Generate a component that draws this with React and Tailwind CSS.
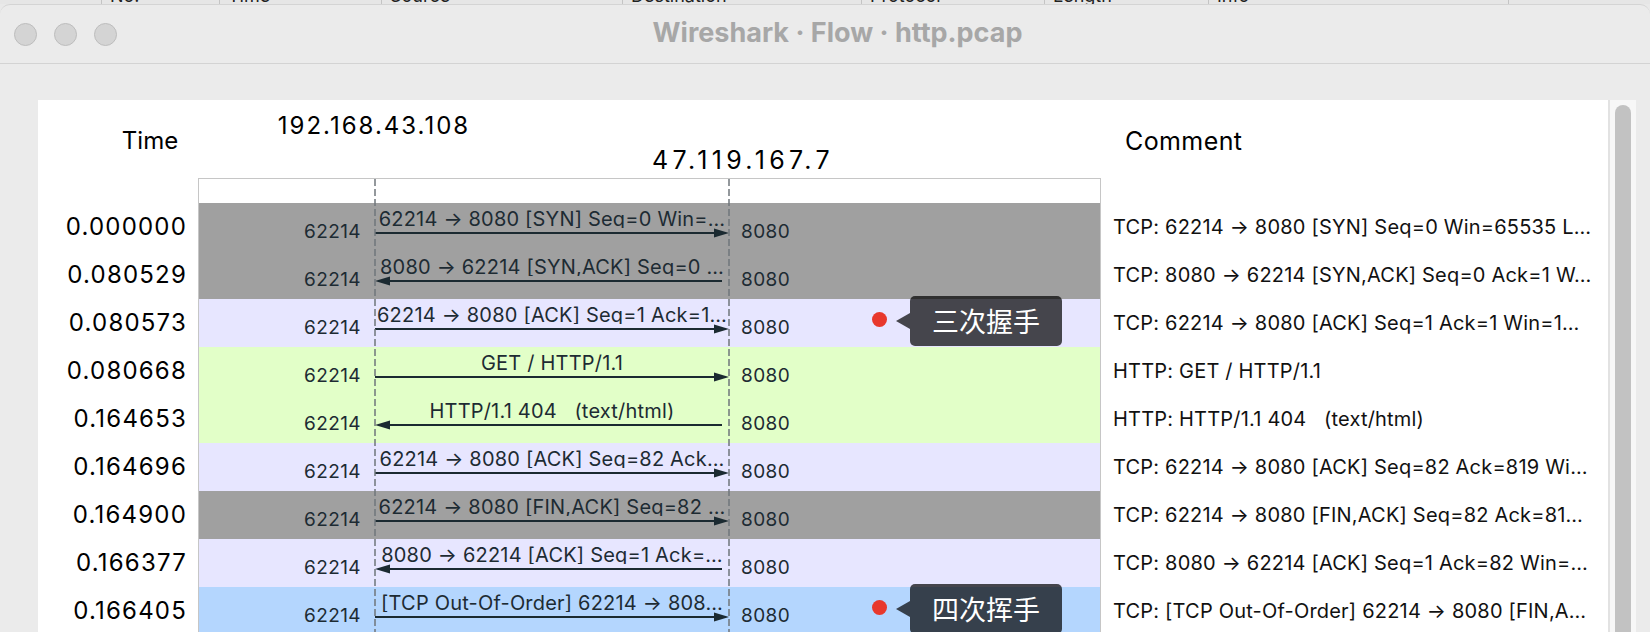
import React from "react";

const rows = [
  { t: "0.000000", bg: "bg-[#a0a0a0]", dir: "r", label: "62214 → 8080 [SYN] Seq=0 Win=…", comment: "TCP: 62214 → 8080 [SYN] Seq=0 Win=65535 L…" },
  { t: "0.080529", bg: "bg-[#a0a0a0]", dir: "l", label: "8080 → 62214 [SYN,ACK] Seq=0 …", comment: "TCP: 8080 → 62214 [SYN,ACK] Seq=0 Ack=1 W…" },
  { t: "0.080573", bg: "bg-[#e7e6ff]", dir: "r", label: "62214 → 8080 [ACK] Seq=1 Ack=1…", comment: "TCP: 62214 → 8080 [ACK] Seq=1 Ack=1 Win=1…", note: "三次握手" },
  { t: "0.080668", bg: "bg-[#e2ffc8]", dir: "r", label: "GET / HTTP/1.1", comment: "HTTP: GET / HTTP/1.1" },
  { t: "0.164653", bg: "bg-[#e2ffc8]", dir: "l", label: "HTTP/1.1 404   (text/html)", comment: "HTTP: HTTP/1.1 404   (text/html)" },
  { t: "0.164696", bg: "bg-[#e7e6ff]", dir: "r", label: "62214 → 8080 [ACK] Seq=82 Ack…", comment: "TCP: 62214 → 8080 [ACK] Seq=82 Ack=819 Wi…" },
  { t: "0.164900", bg: "bg-[#a0a0a0]", dir: "r", label: "62214 → 8080 [FIN,ACK] Seq=82 …", comment: "TCP: 62214 → 8080 [FIN,ACK] Seq=82 Ack=81…" },
  { t: "0.166377", bg: "bg-[#e7e6ff]", dir: "l", label: "8080 → 62214 [ACK] Seq=1 Ack=…", comment: "TCP: 8080 → 62214 [ACK] Seq=1 Ack=82 Win=…" },
  { t: "0.166405", bg: "bg-[#b4d6fe]", dir: "r", label: "[TCP Out-Of-Order] 62214 → 808…", comment: "TCP: [TCP Out-Of-Order] 62214 → 8080 [FIN,A…", note: "四次挥手" },
];

function BackStrip() {
  const cols = [
    { w: "w-[102px]", t: "" },
    { w: "w-[118px]", t: "No." },
    { w: "w-[162px]", t: "Time" },
    { w: "w-[241px]", t: "Source" },
    { w: "w-[239px]", t: "Destination" },
    { w: "w-[183px]", t: "Protocol" },
    { w: "w-[164px]", t: "Length" },
    { w: "w-[300px]", t: "Info" },
  ];
  return (
    <div className="h-[4px] overflow-hidden bg-[#e6e6e6]">
      <div className="flex -mt-[14px] h-[20px] text-[18px] leading-[20px] text-[#222]">
        {cols.map((c, i) => (
          <div key={i} className={`${c.w} shrink-0 h-[20px] border-r border-[#c4c4c4] pl-[8px]`}>
            {c.t}
          </div>
        ))}
      </div>
    </div>
  );
}

function TitleBar() {
  return (
    <div className="h-[59px] shrink-0 border-b border-[#d3d3d3] flex items-center">
      <div className="w-[130px] shrink-0 flex items-center gap-[17px] pl-[14px]">
        <div className="w-[23px] h-[23px] rounded-full bg-[#d4d4d4] border border-[#bdbdbd]" />
        <div className="w-[23px] h-[23px] rounded-full bg-[#d4d4d4] border border-[#bdbdbd]" />
        <div className="w-[23px] h-[23px] rounded-full bg-[#d4d4d4] border border-[#bdbdbd]" />
      </div>
      <div className="w-[1415px] shrink-0 -mt-[2px] text-center text-[27px] font-bold text-[#a7a7a7] leading-[32px]">
        Wireshark · Flow · http.pcap
      </div>
    </div>
  );
}

function Arrow({ dir }) {
  if (dir === "r") {
    return (
      <svg width="354" height="10" viewBox="0 0 354 10" className="block shrink-0">
        <line x1="0" y1="5" x2="342" y2="5" stroke="#1b2a31" strokeWidth="2" />
        <polygon points="339,0.5 354,5 339,9.5" fill="#1b2a31" />
      </svg>
    );
  }
  return (
    <svg width="354" height="10" viewBox="0 0 354 10" className="block shrink-0">
      <line x1="12" y1="5" x2="347" y2="5" stroke="#1b2a31" strokeWidth="2" />
      <polygon points="0,5 15,0.5 15,9.5" fill="#1b2a31" />
    </svg>
  );
}

function Note({ text }) {
  return (
    <>
      <div className="absolute left-[673px] top-[13px] w-[15px] h-[15px] rounded-full bg-[#e8382c]" />
      <div className="absolute left-[697px] top-[-3px] h-[50px] flex items-center">
        <svg width="14" height="16" viewBox="0 0 14 16" className="block">
          <polygon points="0,8 14,0 14,16" fill="rgba(0,0,0,0.7)" />
        </svg>
        <div className="h-[50px] px-[22px] rounded-[5px] bg-black/70 text-white text-[27px] leading-[50px] font-['Noto_Sans_CJK_SC','Inter',sans-serif]">
          {text}
        </div>
      </div>
    </>
  );
}

function GraphRow({ r }) {
  return (
    <div className={`relative h-[48px] flex ${r.bg}`}>
      <div className="w-[176px] shrink-0 pr-[14px] pt-[18px] text-right text-[19px] tracking-[0.4px] leading-[22px] text-[#1d2b33]">
        62214
      </div>
      <div className="w-[354px] shrink-0 flex flex-col">
        <div className="h-[25px] pt-[5px] text-center text-[20px] tracking-[0.2px] leading-[23px] text-[#1d2b33] whitespace-pre overflow-hidden">
          {r.label}
        </div>
        <Arrow dir={r.dir} />
      </div>
      <div className="pl-[12px] pt-[18px] text-[19px] tracking-[0.4px] leading-[22px] text-[#1d2b33]">8080</div>
      {r.note && <Note text={r.note} />}
    </div>
  );
}

function Lifeline({ pos }) {
  return (
    <svg width="2" height="460" viewBox="0 0 2 460" className={`absolute top-0 ${pos} block`}>
      <line x1="1" y1="0" x2="1" y2="460" stroke="#6f767b" strokeWidth="1.5" strokeDasharray="7 3" />
    </svg>
  );
}

function Panel() {
  return (
    <div className="w-[1570px] shrink-0 bg-white flex flex-col overflow-hidden">
      <div className="h-[78px] shrink-0 flex items-start text-[24px] leading-[28px] text-black">
        <div className="w-[224px] shrink-0 pt-[27px] text-center">Time</div>
        <div className="w-[224px] shrink-0 pt-[12px] text-center tracking-[2px]">192.168.43.108</div>
        <div className="w-[224px] shrink-0 ml-[145px] pt-[46px] text-center text-[25px] tracking-[4.3px]">47.119.167.7</div>
        <div className="ml-[270px] pt-[27px] text-[25px] tracking-[0.4px]">Comment</div>
      </div>
      <div className="flex">
        <div className="w-[160px] shrink-0 flex flex-col">
          <div className="h-[25px]" />
          {rows.map((r, i) => (
            <div key={i} className="h-[48px] flex items-center justify-end pr-[11px] text-[24px] tracking-[1.2px] text-black">
              {r.t}
            </div>
          ))}
        </div>
        <div className="relative w-[903px] shrink-0 flex flex-col border-x border-t border-[#c6c6c6]">
          <div className="h-[24px]" />
          {rows.map((r, i) => (
            <GraphRow key={i} r={r} />
          ))}
          <Lifeline pos="left-[175px]" />
          <Lifeline pos="left-[529px]" />
        </div>
        <div className="flex-1 flex flex-col">
          <div className="h-[25px]" />
          {rows.map((r, i) => (
            <div key={i} className="h-[48px] flex items-center pl-[12px] text-[20px] tracking-[0.2px] text-[#111] whitespace-pre">
              {r.comment}
            </div>
          ))}
        </div>
      </div>
    </div>
  );
}

export default function App() {
  return (
    <div className="w-[1650px] h-[632px] overflow-hidden bg-[#e9e9e9] font-['Inter',sans-serif] text-black">
      <BackStrip />
      <div className="h-[628px] flex flex-col bg-[#ebebeb] rounded-t-[10px] border-t border-[#d4d4d4] overflow-hidden">
        <TitleBar />
        <div className="flex-1 flex pt-[36px] pl-[38px] min-h-0">
          <Panel />
          <div className="w-[2px] shrink-0 bg-[#e2e2e2]" />
          <div className="w-[26px] shrink-0 bg-[#f7f7f7] pt-[5px] flex justify-center">
            <div className="w-[16px] h-full rounded-t-full bg-[#c2c2c2]" />
          </div>
        </div>
      </div>
    </div>
  );
}
